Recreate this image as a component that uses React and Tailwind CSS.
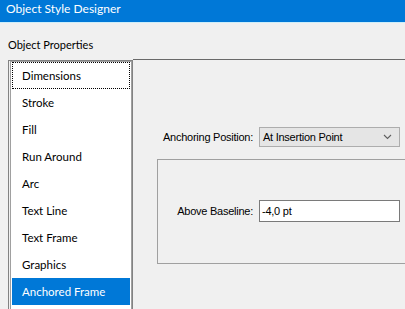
import React from "react";

const items = [
  "Dimensions",
  "Stroke",
  "Fill",
  "Run Around",
  "Arc",
  "Text Line",
  "Text Frame",
  "Graphics",
  "Anchored Frame",
];

export default function App() {
  const selected = "Anchored Frame";
  const focused = "Dimensions";

  return (
    <div className="w-[405px] h-[309px] overflow-hidden bg-[#f0f0f0] font-['Liberation_Sans',sans-serif] text-black">
      {/* Title bar */}
      <div className="h-[23px] bg-[#0078d7] border-b border-[#cdeefa] flex items-start pl-[6px]">
        <span className="font-['Lato',sans-serif] text-[12px] leading-[17px] text-white">
          Object Style Designer
        </span>
      </div>

      {/* Section caption */}
      <div className="h-[36px] pl-[8px] pt-[14px] font-['Lato',sans-serif] text-[11px] leading-[16px]">
        Object Properties
      </div>

      <div className="flex">
        {/* Property list */}
        <div className="shrink-0 ml-[8px] mt-[1px] w-[125px] h-[260px] border border-[#828282] pl-[1px] bg-[#f0f0f0]">
          <div className="h-full border border-[#a0a0a0] bg-white px-[1px]">
            {items.map((item) => (
              <div
                key={item}
                className={`h-[27px] flex items-center pl-[9px] whitespace-nowrap font-['Lato',sans-serif] text-[11.5px] ${
                  item === selected ? "bg-[#0078d7] text-white" : ""
                } ${item === focused ? "border border-dotted border-black" : "border border-transparent"}`}
              >
                {item}
              </div>
            ))}
          </div>
        </div>

        {/* Settings panel */}
        <div className="flex-1 min-w-0 h-[260px] border-t border-[#696969] text-[11px] tracking-[-0.25px] whitespace-nowrap">
          <div className="mt-[67px] flex items-center">
            <div className="shrink-0 w-[122px] text-right pr-[2px]">Anchoring Position:</div>
            <div className="shrink-0 ml-[4px] w-[141px] h-[20px] border border-[#adadad] bg-[#e5e5e5] flex items-center justify-between pl-[3px] pr-[7px]">
              <span>At Insertion Point</span>
              <svg width="9" height="6" viewBox="0 0 9 6">
                <path d="M1 1 L4.5 4.5 L8 1" fill="none" stroke="#5f5f5f" strokeWidth="1.1" />
              </svg>
            </div>
          </div>

          <div className="ml-[24px] mt-[12px] w-[300px] h-[105px] border border-[#a0a0a0]">
            <div className="mt-[40px] flex items-center">
              <div className="shrink-0 w-[97px] text-right pr-[2px]">Above Baseline:</div>
              <div className="shrink-0 ml-[4px] w-[141px] h-[22px] border border-[#7a7a7a] bg-white flex items-center pl-[2px]">
                -4,0 pt
              </div>
            </div>
          </div>
        </div>
      </div>
    </div>
  );
}
